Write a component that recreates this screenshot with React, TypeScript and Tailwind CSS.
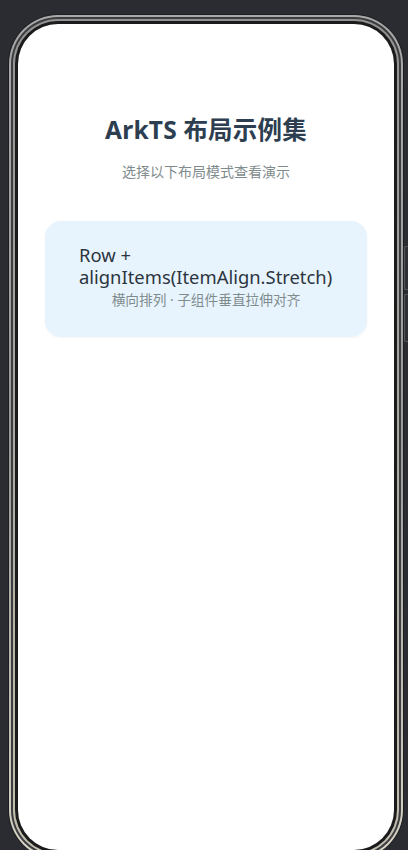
import React from "react";

export default function App() {
  return (
    <div className="relative h-[850px] w-[408px] overflow-hidden bg-[#2b2c31]" style={{ fontFamily: '"Noto Sans", "Noto Sans CJK SC", sans-serif' }}>
      {/* side buttons */}
      <div className="absolute right-0 top-[246px] h-[44px] w-[4px] rounded-l-[2px] border border-r-0 border-[#55565a] bg-[#2f3034]" />
      <div className="absolute right-0 top-[294px] h-[48px] w-[4px] rounded-l-[2px] border border-r-0 border-[#55565a] bg-[#2f3034]" />
      <div className="pl-[8px] pt-[14px]">
        <div className="h-[846px] w-[396px] rounded-[50px] bg-[#1e1f22] p-[1px]">
          <div className="h-full w-full rounded-[49px] bg-gradient-to-b from-[#a9a9a9] via-[#9a9a9a] to-[#d8d3c4] p-[2px]">
            <div className="h-full w-full rounded-[47px] bg-[#3c3d40] p-[2px]">
              <div className="h-full w-full rounded-[45px] bg-gradient-to-b from-[#929292] to-[#c4bfb0] p-[2px]">
                <div className="h-full w-full rounded-[43px] bg-[#1b1b1b] p-[3px]">
                  <div className="flex h-full w-full flex-col items-center rounded-[40px] bg-white">
                    <h1 className="mt-[90px] text-[24.5px] font-bold leading-[32px] tracking-[0.2px] text-[#2c3e50]">ArkTS 布局示例集</h1>
                    <p className="mt-[16px] text-[14px] leading-[20px] text-[#7f8c8d]">选择以下布局模式查看演示</p>
                    <div className="mt-[39px] flex w-[322px] flex-col items-center rounded-[16px] bg-[#e8f4fd] px-[34px] pb-[30px] pt-[23px] shadow-[0_1px_3px_rgba(0,0,0,0.04)]">
                      <div className="self-stretch text-left text-[18.4px] leading-[22px] text-[#2c3440]">Row + alignItems(ItemAlign.Stretch)</div>
                      <div className="mt-[4px] text-[13.7px] leading-[15px] text-[#7f8c8d]">横向排列 · 子组件垂直拉伸对齐</div>
                    </div>
                  </div>
                </div>
              </div>
            </div>
          </div>
        </div>
      </div>
    </div>
  );
}
